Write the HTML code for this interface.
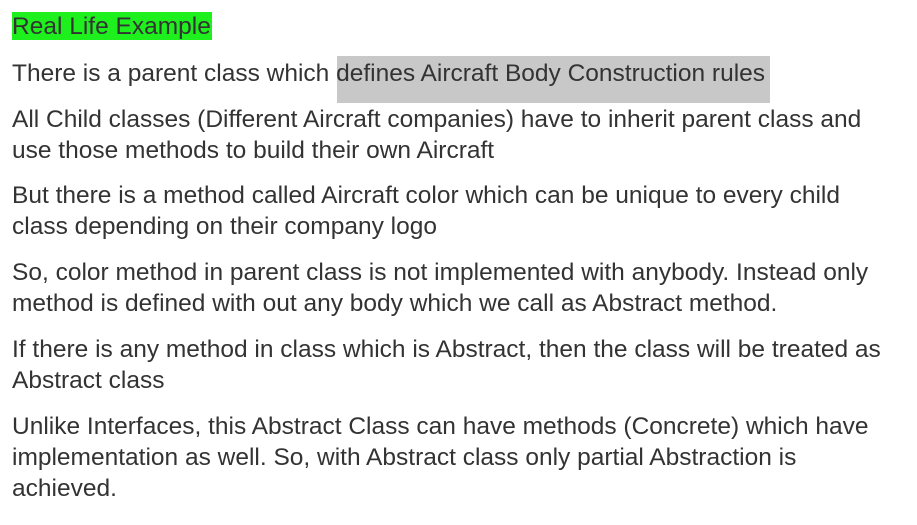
<!DOCTYPE html>
<html><head><meta charset="utf-8"><style>
body{margin:0;width:917px;height:525px;background:#fff;overflow:hidden;position:relative;font-family:"Liberation Sans",Arial,sans-serif;font-size:24.5px;color:#333}
.l{position:absolute;left:12px;white-space:nowrap;line-height:31px;height:31px}
.h{position:absolute;left:337px;top:56px;width:433px;height:47px;background:#c8c8c8}
</style></head><body>
<div style="position:absolute;left:12px;top:12px;width:200px;height:28px;background:#1ef01e"></div>
<div class="h"></div>
<div class="l" style="top:11px">Real Life Example</div>
<div class="l" style="top:58px">There is a parent class which defines Aircraft Body Construction rules</div>
<div class="l" style="top:104px">All Child classes (Different Aircraft companies) have to inherit parent class and</div>
<div class="l" style="top:135px">use those methods to build their own Aircraft</div>
<div class="l" style="top:180px">But there is a method called Aircraft color which can be unique to every child</div>
<div class="l" style="top:211px">class depending on their company logo</div>
<div class="l" style="top:257px">So, color method in parent class is not implemented with anybody. Instead only</div>
<div class="l" style="top:288px">method is defined with out any body which we call as Abstract method.</div>
<div class="l" style="top:334px">If there is any method in class which is Abstract, then the class will be treated as</div>
<div class="l" style="top:365px">Abstract class</div>
<div class="l" style="top:411px">Unlike Interfaces, this Abstract Class can have methods (Concrete) which have</div>
<div class="l" style="top:442px">implementation as well. So, with Abstract class only partial Abstraction is</div>
<div class="l" style="top:473px">achieved.</div>
</body></html>
